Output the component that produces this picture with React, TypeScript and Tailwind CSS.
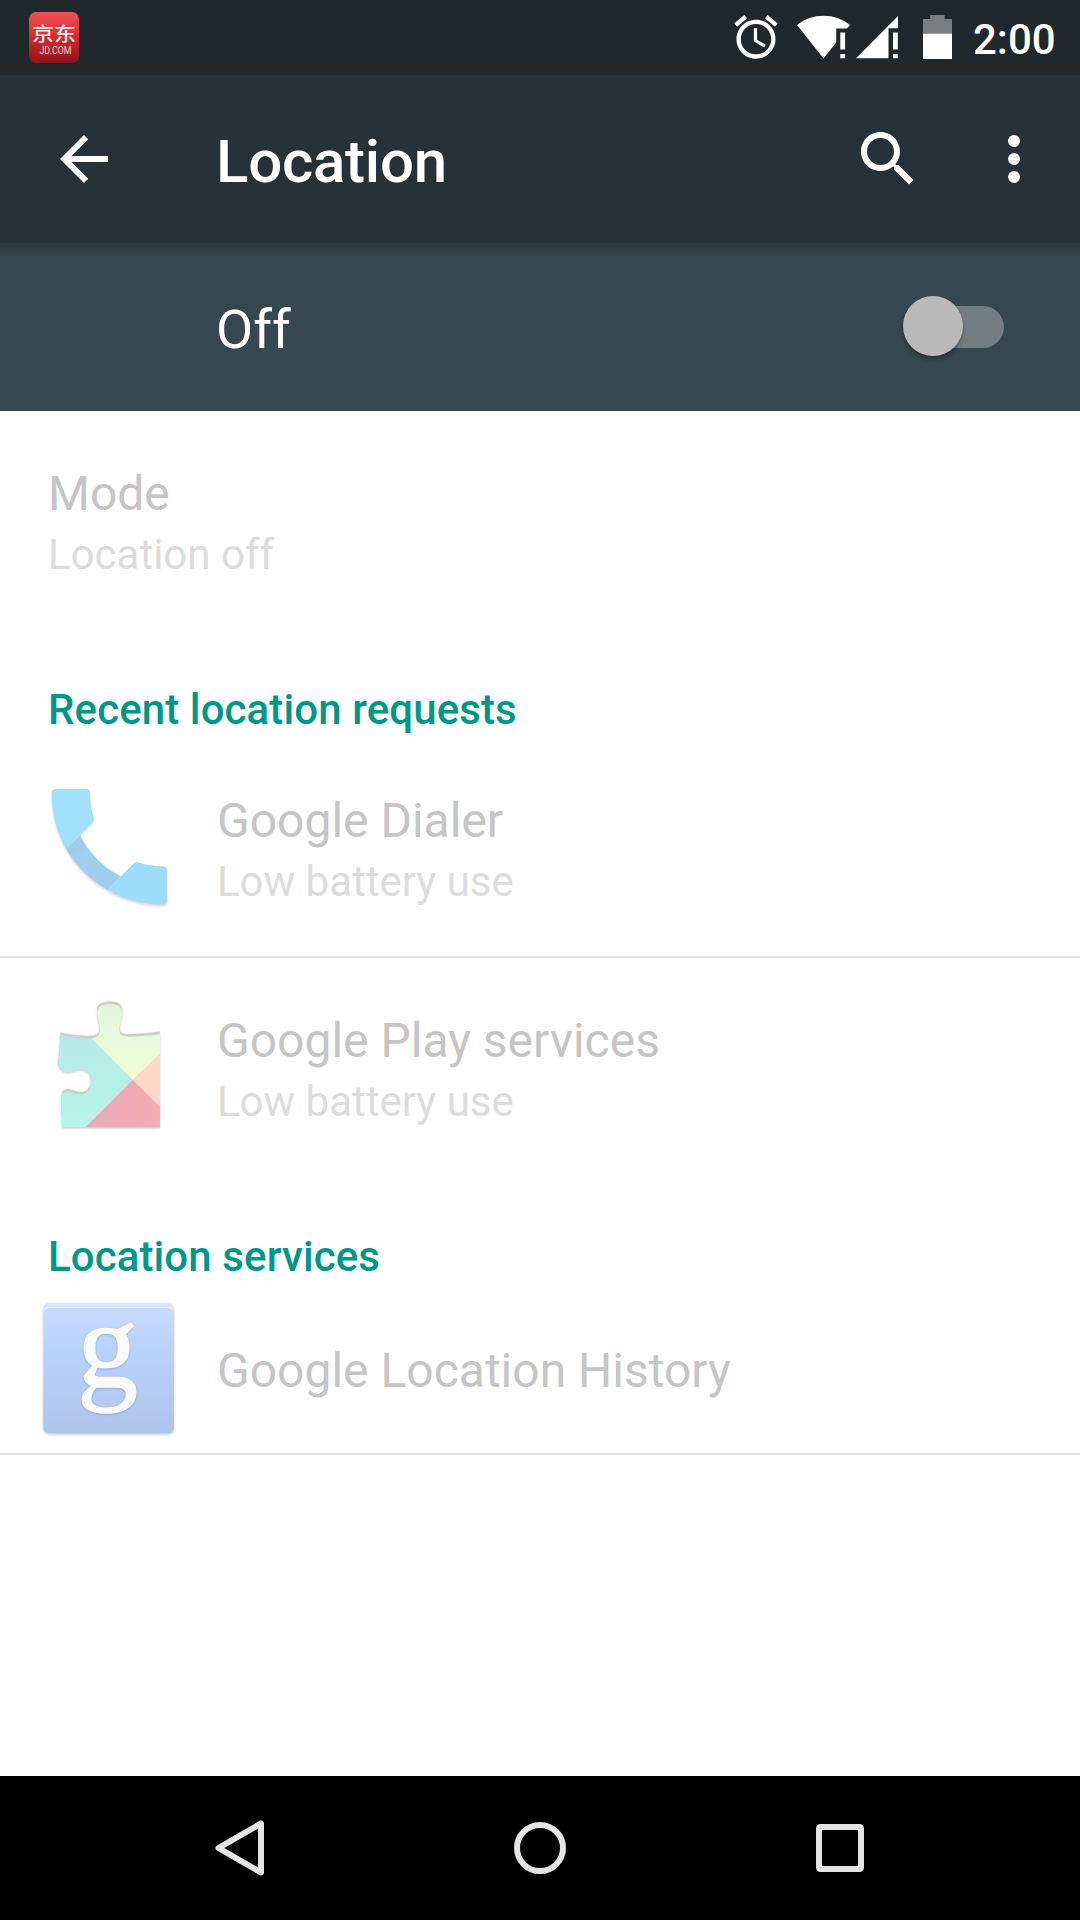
import React from 'react';

interface PreferenceRowProps {
  icon: React.ReactNode;
  title: string;
  summary?: string;
}

const JdIcon = () => (
  <svg width="50" height="51" viewBox="0 0 50 51">
    <defs>
      <linearGradient id="jd" x1="0" y1="0" x2="0" y2="1">
        <stop offset="0" stopColor="#ee5257" />
        <stop offset="0.45" stopColor="#d92c33" />
        <stop offset="1" stopColor="#8c1418" />
      </linearGradient>
    </defs>
    <rect width="50" height="51" rx="7" fill="url(#jd)" />
    <text x="25" y="28.5" textAnchor="middle" fontSize="22" fontWeight="500" fill="#fbe9e9" fontFamily='"Noto Sans CJK SC", sans-serif' textLength="44" lengthAdjust="spacingAndGlyphs" transform="translate(0 4) scale(1 0.86)">京东</text>
    <text x="26.5" y="42" textAnchor="middle" fontSize="10" fill="#f3cccc" fontFamily='Roboto, sans-serif' textLength="32" lengthAdjust="spacingAndGlyphs">JD.COM</text>
  </svg>
);

const AlarmIcon = () => (
  <svg width="52" height="52" viewBox="0 0 24 24" fill="#fff">
    <path d="M22 5.72l-4.6-3.86-1.29 1.53 4.6 3.86L22 5.72zM7.88 3.39L6.6 1.86 2 5.71l1.29 1.53 4.59-3.85zM12.5 8H11v6l4.75 2.85.75-1.23-4-2.37V8zM12 4c-4.97 0-9 4.03-9 9s4.02 9 9 9c4.97 0 9-4.03 9-9s-4.03-9-9-9zm0 16c-3.87 0-7-3.13-7-7s3.13-7 7-7 7 3.13 7 7-3.13 7-7 7z" />
  </svg>
);

const WifiIcon = () => (
  <svg width="54" height="44" viewBox="0 0 54 44" fill="#fff">
    <path d="M26.5 43.5L0 10Q11.5 .8 26.5 .8T53 10l-3 3.5H39.200V27.500Z" />
    <path d="M43.300 17.500h4.800V34.500h-4.800zM43.300 39h4.800v4.300h-4.800z" />
  </svg>
);

const SignalIcon = () => (
  <svg width="43" height="44" viewBox="0 0 43 44" fill="#fff">
    <path d="M0 43.300L42 1v12.300H32.500v30z" />
    <path d="M37 17.500h4.800V34.500H37zM37 39h4.800v4.300H37z" />
  </svg>
);

const BatteryIcon = () => (
  <svg width="29" height="44" viewBox="0 0 29 44">
    <path d="M7.200 0h14.400v4H29v15H0V4h7.200z" fill="#7a7d80" />
    <path d="M0 18.700h29V44H0z" fill="#fff" />
  </svg>
);

const PhoneIcon = () => (
  <svg width="144" height="144" viewBox="0 0 144 144" className="drop-shadow-[0_2px_1px_rgba(0,0,0,0.14)]">
    <defs>
      <linearGradient id="handle" x1="0" y1="0" x2="1" y2="1">
        <stop offset="0" stopColor="#9cc8e6" />
        <stop offset="0.4" stopColor="#9fd1ef" />
        <stop offset="1" stopColor="#9ccdec" />
      </linearGradient>
    </defs>
    <path d="M44 60.500C53.500 78.500 67 92 84.700 101.300L71.500 115C54 105 40 91 30.300 74Z" fill="url(#handle)" />
    <path d="M19.500 14H50.500Q54 14 54 17.500C54 26 55 34.500 57.600 43Q58.200 45.200 56.500 47.200L30.300 74C20.500 57 15.700 38 15.700 18Q15.700 14 19.500 14Z" fill="#a2dffb" />
    <path d="M71.300 115L98 88.200Q99.800 86.600 102 87.200C110 89.800 118 91 127 91.200Q130.800 91.400 130.800 95V126Q130.800 129.700 127 129.700C107 129.500 88 124.500 71.300 115Z" fill="#9edcfb" />
  </svg>
);

const PUZZLE =
  'M24.300 37.500Q40 41 54 40.800Q65 40.500 63.500 32C63 27 61 23 61 16C61 9 66 6.600 74 6.600C82 6.600 86.300 9 86.300 16C86.300 23 84 27 83.600 32C83.300 38 87 39 93 39Q108 38.500 124 36.500V132.300H26.600Q24.500 116 25.800 98Q27 93.500 33 94C40 95.500 43 98.300 49 96C53 94 55 90 55 85C54.500 78 51 74.800 44 74.700C38 75 33 79 28 76.600C23 74 22 70 22.300 66Q24 52 24.300 37.500Z';

const PuzzleIcon = () => (
  <svg width="144" height="144" viewBox="0 0 144 144" className="drop-shadow-[0_1px_1px_rgba(0,0,0,0.2)]">
    <defs>
      <clipPath id="outer">
        <path d={PUZZLE} />
      </clipPath>
      <clipPath id="face">
        <path d={PUZZLE} transform="translate(0 2.700)" />
      </clipPath>
      <linearGradient id="teal" x1="0" y1="0" x2="0" y2="1">
        <stop offset="0" stopColor="#b5e5e8" />
        <stop offset="1" stopColor="#b6f7e8" />
      </linearGradient>
      <linearGradient id="green" x1="0" y1="0" x2="0" y2="1">
        <stop offset="0" stopColor="#dff5e0" />
        <stop offset="1" stopColor="#f0ffd8" />
      </linearGradient>
      <linearGradient id="red" x1="0" y1="0" x2="1" y2="0">
        <stop offset="0" stopColor="#e8adc0" />
        <stop offset="0.6" stopColor="#f0a9b4" />
        <stop offset="1" stopColor="#f2adb0" />
      </linearGradient>
    </defs>
    <path d={PUZZLE} fill="#d2cbcc" />
    <g clipPath="url(#outer)">
      <g clipPath="url(#face)">
        <path d="M20 8L96.700 85L49 132.500V140H20Z" fill="url(#teal)" />
        <path d="M20 8V0H126V57L96.700 85Z" fill="url(#green)" />
        <path d="M126 57L96.700 85L126 114Z" fill="#ffd9c8" />
        <path d="M96.700 85L126 114V140H41.500Z" fill="url(#red)" />
      </g>
    </g>
  </svg>
);

const GoogleIcon = () => (
  <svg width="144" height="144" viewBox="0 0 144 144" className="overflow-visible drop-shadow-[0_1px_1px_rgba(0,0,0,0.2)]">
    <defs>
      <linearGradient id="tile" x1="0" y1="0" x2="0" y2="1">
        <stop offset="0" stopColor="#c8dbfd" />
        <stop offset="0.3" stopColor="#bad3fd" />
        <stop offset="1" stopColor="#afc4eb" />
      </linearGradient>
    </defs>
    <rect x="7.300" y="7" width="130.700" height="130.500" rx="6" fill="#d6e5fd" />
    <rect x="7.300" y="10.500" width="130.700" height="127" rx="6" fill="#e6effe" />
    <rect x="7.300" y="12" width="130.700" height="125.500" rx="6" fill="url(#tile)" />
    <text x="41" y="90.500" fontSize="122" fill="#fafafa" stroke="#fafafa" strokeWidth="1.500" fontFamily='"Liberation Serif", serif' className="drop-shadow-[0_1px_1px_rgba(60,90,150,0.3)]">g</text>
  </svg>
);

const CategoryHeader = ({ children }: { children: React.ReactNode }) => (
  <h2 className="pl-12 text-[42px] leading-[57px] font-medium tracking-[0.1px] text-[#009688]">{children}</h2>
);

const PreferenceRow: React.FC<PreferenceRowProps> = ({ icon, title, summary }) => (
  <div className="flex h-[220px] items-start gap-[37px] px-9">
    <div className="mt-[37px] shrink-0">{icon}</div>
    <div className="mt-[51px]">
      <div className="text-[48px] leading-[64px] text-[#c5c5c5]">{title}</div>
      {summary && <div className="text-[42px] leading-[58px] text-[#dcdcdc]">{summary}</div>}
    </div>
  </div>
);

export default function App() {
  return (
    <div className="flex h-[1920px] w-[1080px] flex-col overflow-hidden bg-white font-['Roboto',sans-serif]">
      {/* status bar */}
      <div className="flex h-[75px] shrink-0 items-start bg-[#21272b] pl-[29px] text-white">
        <div className="mt-3"><JdIcon /></div>
        <div className="mt-[11px] ml-[651px]"><AlarmIcon /></div>
        <div className="mt-[15px] ml-[15px]"><WifiIcon /></div>
        <div className="mt-[15px] ml-[5px]"><SignalIcon /></div>
        <div className="mt-[15px] ml-6"><BatteryIcon /></div>
        <div className="mt-[15px] ml-[21px] text-[42px] leading-[50px] font-medium">2:00</div>
      </div>

      {/* toolbar */}
      <header className="flex h-[168px] shrink-0 items-center bg-[#263238] pr-[30px] pl-12 text-white">
        <svg width="72" height="72" viewBox="0 0 24 24" fill="#fff">
          <path d="M20 11H7.83l5.59-5.59L12 4l-8 8 8 8 1.410-1.410L7.83 13H20v-2z" />
        </svg>
        <h1 className="ml-24 flex-1 pt-[5px] text-[60px] leading-[72px] font-medium tracking-[-0.25px]">Location</h1>
        <svg width="72" height="72" viewBox="0 0 24 24" fill="#fff">
          <path d="M15.5 14h-.79l-.28-.27C15.41 12.59 16 11.11 16 9.5 16 5.91 13.09 3 9.5 3S3 5.91 3 9.5 5.91 16 9.5 16c1.61 0 3.09-.59 4.23-1.57l.27.28v.79l5 4.99L20.49 19l-4.99-5zm-6 0C7.01 14 5 11.99 5 9.5S7.01 5 9.5 5 14 7.01 14 9.5 11.99 14 9.5 14z" />
        </svg>
        <svg width="72" height="72" viewBox="0 0 24 24" fill="#fff" className="ml-[54px]">
          <circle cx="12" cy="6" r="2" />
          <circle cx="12" cy="12" r="2" />
          <circle cx="12" cy="18" r="2" />
        </svg>
      </header>

      {/* master switch */}
      <div className="flex h-[168px] shrink-0 items-center justify-between bg-[#37474f] bg-[linear-gradient(to_bottom,#2b383e_0px,#37474f_13px)] pr-[76px] pl-[216px]">
        <span className="pt-[5px] text-[54px] leading-[64px] text-white">Off</span>
        <div className="relative h-[42px] w-[98px] rounded-full bg-[#737e84]">
          <div className="absolute -top-[10px] -left-[3px] h-[60px] w-[60px] rounded-full bg-[#b9b9b9] shadow-[0_3px_4px_rgba(0,0,0,0.3)]" />
        </div>
      </div>

      <main className="flex-1">
        <div className="pt-[51px] pl-12">
          <div className="text-[48px] leading-[64px] text-[#c5c5c5]">Mode</div>
          <div className="text-[42px] leading-[58px] text-[#dcdcdc]">Location off</div>
        </div>

        <section className="pt-[97px]">
          <CategoryHeader>Recent location requests</CategoryHeader>
          <div className="[&>div:first-child]:border-b-2 [&>div:first-child]:border-[#e0e0e0]">
            <PreferenceRow icon={<PhoneIcon />} title="Google Dialer" summary="Low battery use" />
            <PreferenceRow icon={<PuzzleIcon />} title="Google Play services" summary="Low battery use" />
          </div>
        </section>

        <section className="pt-[50px]">
          <CategoryHeader>Location services</CategoryHeader>
          <div className="flex h-[170px] items-start gap-[37px] border-b-2 border-[#e0e0e0] px-9">
            <div className="mt-[11px] shrink-0"><GoogleIcon /></div>
            <div className="mt-[54px] text-[48px] leading-[64px] text-[#c5c5c5]">Google Location History</div>
          </div>
        </section>
      </main>

      {/* navigation bar */}
      <nav className="flex h-36 shrink-0 items-center bg-black px-[90px]">
        <div className="flex w-[300px] justify-center">
          <svg width="60" height="60" viewBox="0 0 60 60" fill="none" stroke="#e5e5e5" strokeWidth="6" strokeLinejoin="round">
            <path d="M51 5.500V54.500L8.500 30Z" />
          </svg>
        </div>
        <div className="flex w-[300px] justify-center">
          <svg width="60" height="60" viewBox="0 0 60 60" fill="none" stroke="#e5e5e5" strokeWidth="6">
            <circle cx="30" cy="30" r="23" />
          </svg>
        </div>
        <div className="flex w-[300px] justify-center">
          <svg width="60" height="60" viewBox="0 0 60 60" fill="none" stroke="#e5e5e5" strokeWidth="6">
            <rect x="9" y="9" width="42" height="42" rx="1.500" />
          </svg>
        </div>
      </nav>
    </div>
  );
}
